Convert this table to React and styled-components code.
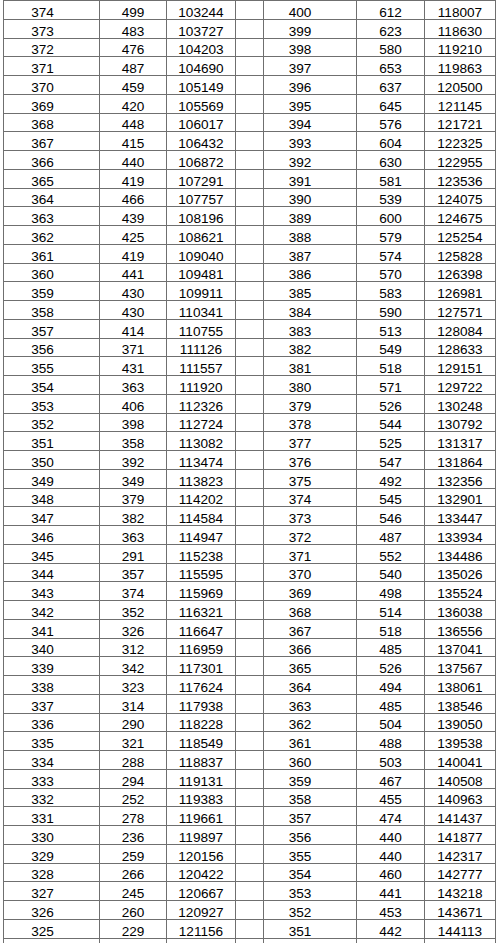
import styled, { createGlobalStyle } from "styled-components"

const left = [
  [374, 499, 103244], [373, 483, 103727], [372, 476, 104203], [371, 487, 104690],
  [370, 459, 105149], [369, 420, 105569], [368, 448, 106017], [367, 415, 106432],
  [366, 440, 106872], [365, 419, 107291], [364, 466, 107757], [363, 439, 108196],
  [362, 425, 108621], [361, 419, 109040], [360, 441, 109481], [359, 430, 109911],
  [358, 430, 110341], [357, 414, 110755], [356, 371, 111126], [355, 431, 111557],
  [354, 363, 111920], [353, 406, 112326], [352, 398, 112724], [351, 358, 113082],
  [350, 392, 113474], [349, 349, 113823], [348, 379, 114202], [347, 382, 114584],
  [346, 363, 114947], [345, 291, 115238], [344, 357, 115595], [343, 374, 115969],
  [342, 352, 116321], [341, 326, 116647], [340, 312, 116959], [339, 342, 117301],
  [338, 323, 117624], [337, 314, 117938], [336, 290, 118228], [335, 321, 118549],
  [334, 288, 118837], [333, 294, 119131], [332, 252, 119383], [331, 278, 119661],
  [330, 236, 119897], [329, 259, 120156], [328, 266, 120422], [327, 245, 120667],
  [326, 260, 120927], [325, 229, 121156], [324, 231, 121387],
]

const right = [
  [400, 612, 118007], [399, 623, 118630], [398, 580, 119210], [397, 653, 119863],
  [396, 637, 120500], [395, 645, 121145], [394, 576, 121721], [393, 604, 122325],
  [392, 630, 122955], [391, 581, 123536], [390, 539, 124075], [389, 600, 124675],
  [388, 579, 125254], [387, 574, 125828], [386, 570, 126398], [385, 583, 126981],
  [384, 590, 127571], [383, 513, 128084], [382, 549, 128633], [381, 518, 129151],
  [380, 571, 129722], [379, 526, 130248], [378, 544, 130792], [377, 525, 131317],
  [376, 547, 131864], [375, 492, 132356], [374, 545, 132901], [373, 546, 133447],
  [372, 487, 133934], [371, 552, 134486], [370, 540, 135026], [369, 498, 135524],
  [368, 514, 136038], [367, 518, 136556], [366, 485, 137041], [365, 526, 137567],
  [364, 494, 138061], [363, 485, 138546], [362, 504, 139050], [361, 488, 139538],
  [360, 503, 140041], [359, 467, 140508], [358, 455, 140963], [357, 474, 141437],
  [356, 440, 141877], [355, 440, 142317], [354, 460, 142777], [353, 441, 143218],
  [352, 453, 143671], [351, 442, 144113], [350, 441, 144554],
]

const Global = createGlobalStyle`
  html, body { margin: 0; padding: 0; background: #fff; overflow: hidden; }
  body { font-family: "Liberation Sans", Arial, sans-serif; color: #000; }
`

const Sheet = styled.div`
  display: grid;
  grid-template-columns: 96px 67px 69px 28px 93px 68px 71px;
  grid-auto-rows: 18.76px;
  margin-left: 3px;
  width: max-content;
  border-left: 1px solid #6f6f6f;
  border-top: 1px solid #6f6f6f;
`

const Cell = styled.div`
  display: flex;
  align-items: flex-end;
  justify-content: center;
  padding-right: ${(p) => p.$shift || 0}px;
  border-right: 1px solid #6f6f6f;
  border-bottom: 1px solid #6f6f6f;
  font-size: 13.6px;
  line-height: 13px;
  overflow: hidden;
  white-space: nowrap;
`

export default function App() {
  return (
    <>
      <Global />
      <Sheet>
        {left.map((row, i) => {
          const r = right[i]
          return [
            <Cell key={`a${i}`} $shift={18}>{row[0]}</Cell>,
            <Cell key={`b${i}`}>{row[1]}</Cell>,
            <Cell key={`c${i}`}>{row[2]}</Cell>,
            <Cell key={`d${i}`} />,
            <Cell key={`e${i}`} $shift={20}>{r[0]}</Cell>,
            <Cell key={`f${i}`}>{r[1]}</Cell>,
            <Cell key={`g${i}`}>{r[2]}</Cell>,
          ]
        })}
      </Sheet>
    </>
  )
}
